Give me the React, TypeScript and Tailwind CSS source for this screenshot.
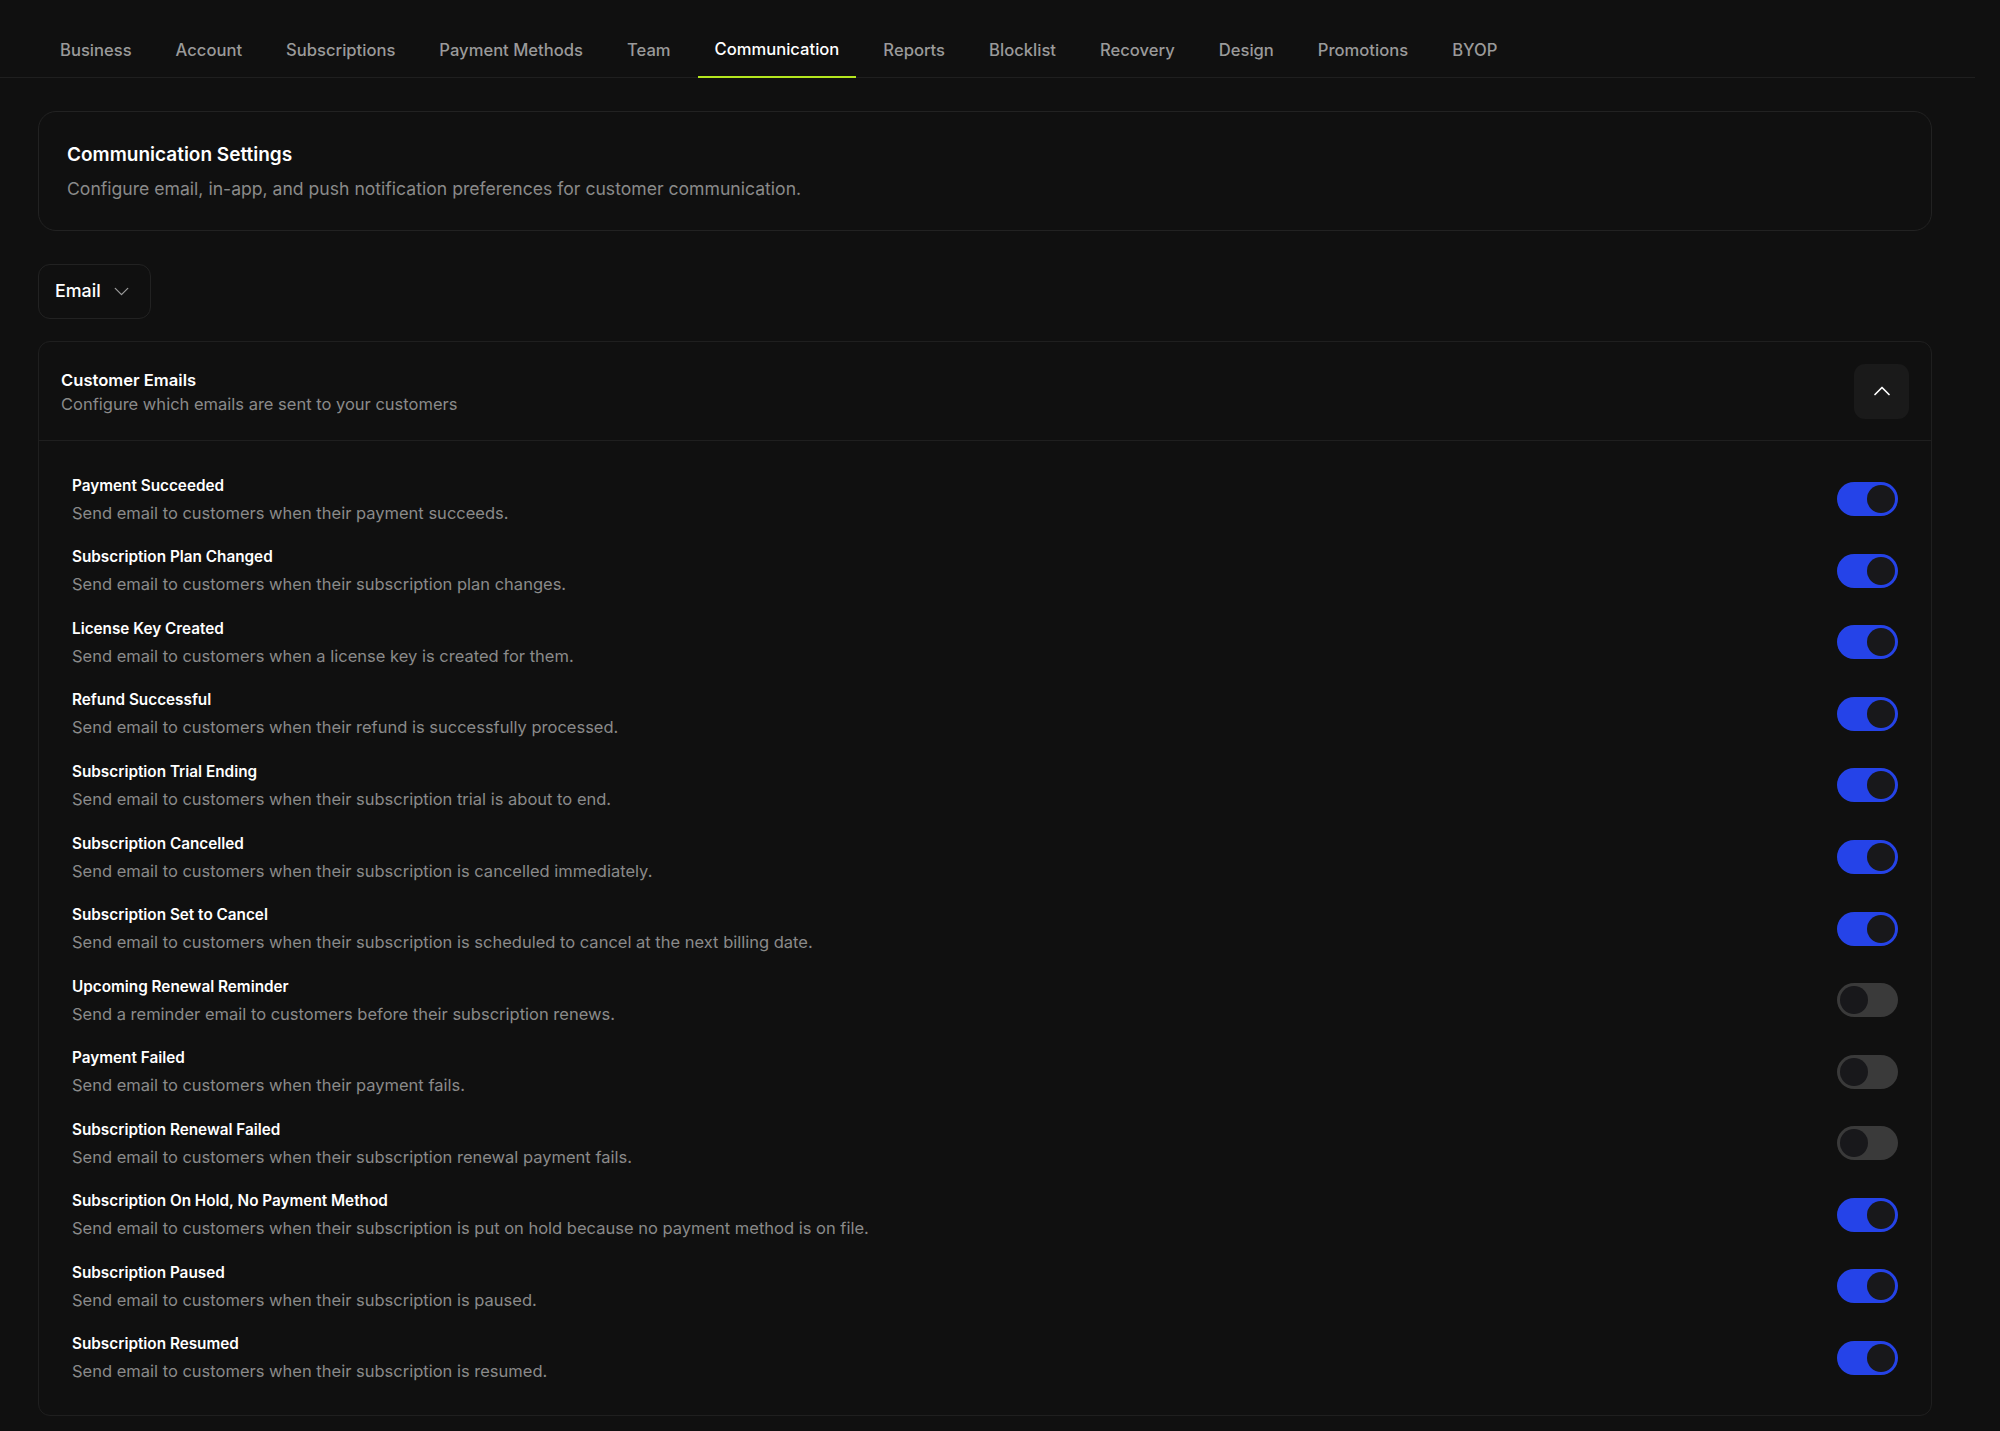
import { ChevronDown, ChevronUp } from "lucide-react";

const tabs = [
  "Business",
  "Account",
  "Subscriptions",
  "Payment Methods",
  "Team",
  "Communication",
  "Reports",
  "Blocklist",
  "Recovery",
  "Design",
  "Promotions",
  "BYOP",
];

const rows = [
  { title: "Payment Succeeded", desc: "Send email to customers when their payment succeeds.", on: true },
  { title: "Subscription Plan Changed", desc: "Send email to customers when their subscription plan changes.", on: true },
  { title: "License Key Created", desc: "Send email to customers when a license key is created for them.", on: true },
  { title: "Refund Successful", desc: "Send email to customers when their refund is successfully processed.", on: true },
  { title: "Subscription Trial Ending", desc: "Send email to customers when their subscription trial is about to end.", on: true },
  { title: "Subscription Cancelled", desc: "Send email to customers when their subscription is cancelled immediately.", on: true },
  { title: "Subscription Set to Cancel", desc: "Send email to customers when their subscription is scheduled to cancel at the next billing date.", on: true },
  { title: "Upcoming Renewal Reminder", desc: "Send a reminder email to customers before their subscription renews.", on: false },
  { title: "Payment Failed", desc: "Send email to customers when their payment fails.", on: false },
  { title: "Subscription Renewal Failed", desc: "Send email to customers when their subscription renewal payment fails.", on: false },
  { title: "Subscription On Hold, No Payment Method", desc: "Send email to customers when their subscription is put on hold because no payment method is on file.", on: true },
  { title: "Subscription Paused", desc: "Send email to customers when their subscription is paused.", on: true },
  { title: "Subscription Resumed", desc: "Send email to customers when their subscription is resumed.", on: true },
];

function Toggle({ on }: { on: boolean }) {
  return (
    <div
      className={
        on
          ? "flex h-[34px] w-[61px] items-center justify-end rounded-full bg-[#2543e8] px-[3px]"
          : "flex h-[34px] w-[61px] items-center justify-start rounded-full bg-[#3a3a3a] px-[3px]"
      }
    >
      <div className="h-[28px] w-[28px] rounded-full bg-[#18181b]" />
    </div>
  );
}

export default function App() {
  return (
    <div className="h-[1431px] w-[2000px] overflow-hidden bg-[#101010] font-['Inter',sans-serif]">
      <nav className="flex h-[78px] w-[1975px] items-end gap-[10px] border-b border-[#1f1f1f] pl-[43px]">
        {tabs.map((t) => (
          <div
            key={t}
            className={
              t === "Communication"
                ? "-mb-px flex h-[55px] items-center border-b-2 border-[#b4e61e] px-[17px] text-[16.6px] font-medium text-white"
                : "-mb-px flex h-[55px] items-center px-[17px] text-[16.6px] font-medium text-[#9a9a9a]"
            }
          >
            {t}
          </div>
        ))}
      </nav>

      <div className="ml-[38px] mt-[33px] w-[1894px]">
        <section className="flex h-[120px] flex-col justify-center rounded-[18px] border border-[#222222] px-[28px] pt-px">
          <h1 className="text-[19px] font-semibold leading-[30px] text-white">Communication Settings</h1>
          <p className="mt-[5px] text-[17.6px] leading-[28px] text-[#8a8a8a]">
            Configure email, in-app, and push notification preferences for customer communication.
          </p>
        </section>

        <div className="mt-[33px] flex h-[55px] w-[113px] items-center gap-[8px] rounded-[12px] border border-[#222222] pl-[16px]">
          <span className="text-[17.85px] font-medium text-white">Email</span>
          <ChevronDown className="h-[25px] w-[25px] text-[#9a9a9a]" strokeWidth={1.25} />
        </div>

        <section className="mt-[22px] h-[1075px] rounded-[12px] border border-[#1f1f1f]">
          <header className="flex h-[99px] items-center justify-between border-b border-[#1f1f1f] px-[22px]">
            <div className="pt-[3px]">
              <h2 className="text-[16.6px] font-semibold leading-[25px] text-white">Customer Emails</h2>
              <p className="-mt-px text-[16.5px] leading-[25px] text-[#8a8a8a]">Configure which emails are sent to your customers</p>
            </div>
            <div className="flex h-[55px] w-[55px] items-center justify-center rounded-[11px] bg-[#1a1a1a]">
              <ChevronUp className="h-[28px] w-[28px] text-white" strokeWidth={1.5} />
            </div>
          </header>
          <div className="px-[33px] pt-[22.5px]">
            {rows.map((r) => (
              <div key={r.title} className="flex h-[71.56px] items-center justify-between">
                <div>
                  <div className="text-[15.3px] font-semibold leading-[28px] text-white">{r.title}</div>
                  <div className="-mt-px text-[16.5px] leading-[28px] text-[#8a8a8a]">{r.desc}</div>
                </div>
                <Toggle on={r.on} />
              </div>
            ))}
          </div>
        </section>
      </div>
    </div>
  );
}
